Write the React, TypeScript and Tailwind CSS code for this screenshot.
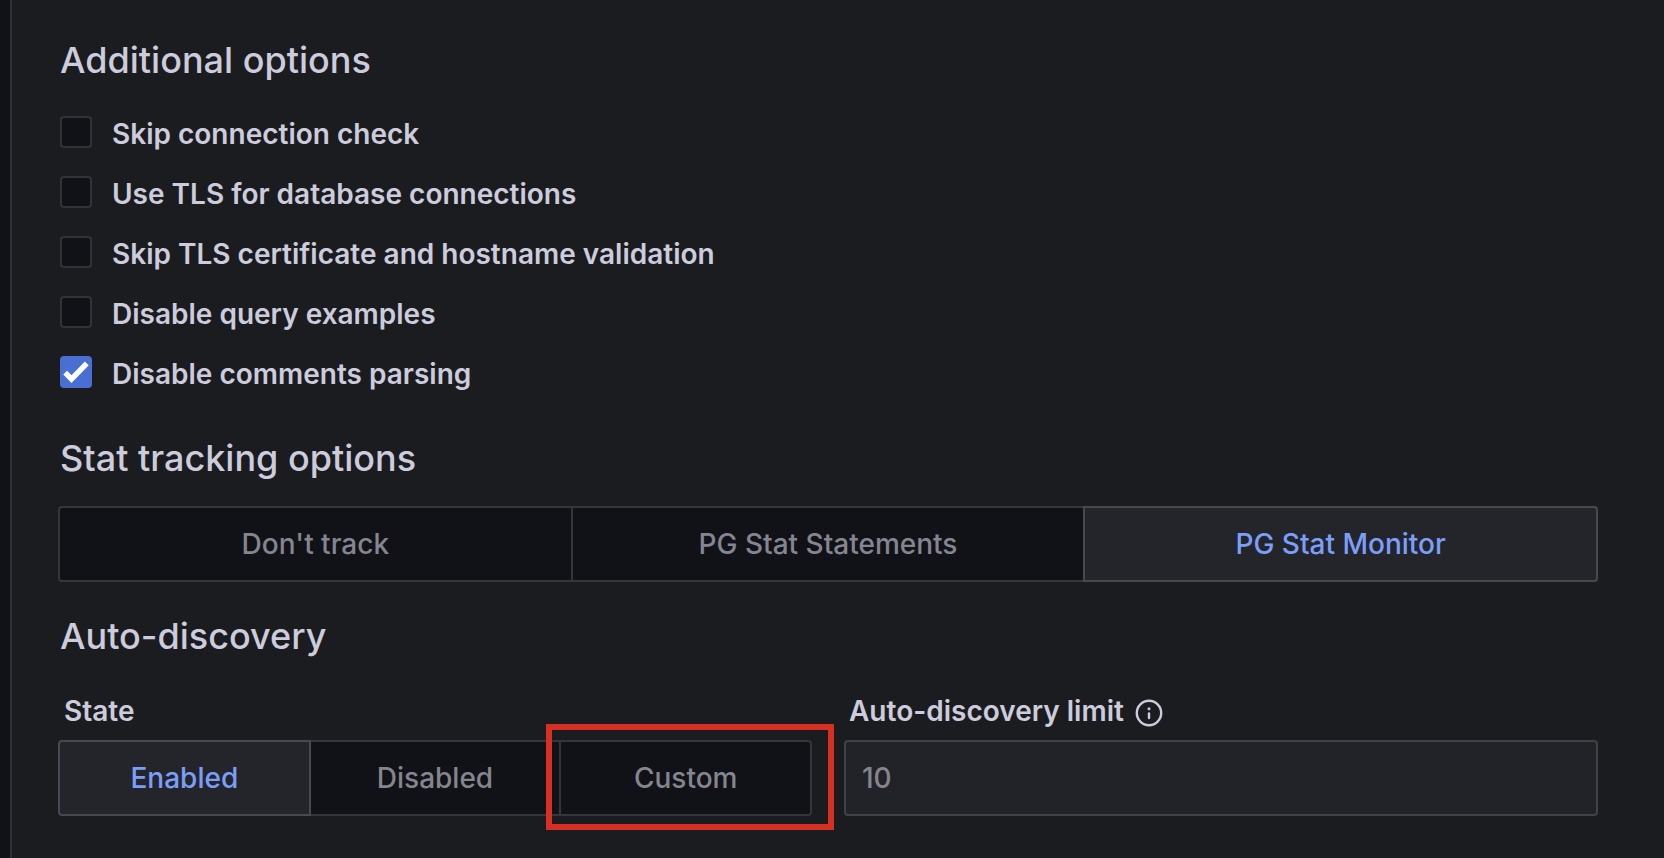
import { useState } from 'react';

type Option = { value: string; label: string; highlighted?: boolean };

const CHECKS = [
  { id: 'skip-connection', label: 'Skip connection check', checked: false },
  { id: 'use-tls', label: 'Use TLS for database connections', checked: false },
  { id: 'skip-tls', label: 'Skip TLS certificate and hostname validation', checked: false },
  { id: 'disable-examples', label: 'Disable query examples', checked: false },
  { id: 'disable-comments', label: 'Disable comments parsing', checked: true },
];

const TRACKING: Option[] = [
  { value: 'none', label: "Don't track" },
  { value: 'statements', label: 'PG Stat Statements' },
  { value: 'monitor', label: 'PG Stat Monitor' },
];

const DISCOVERY: Option[] = [
  { value: 'enabled', label: 'Enabled' },
  { value: 'disabled', label: 'Disabled' },
  { value: 'custom', label: 'Custom', highlighted: true },
];

function Heading({ children }: { children: string }) {
  return <h2 className="mb-[26px] text-4xl leading-[44px] font-medium">{children}</h2>;
}

function CheckRow({ id, label, checked }: { id: string; label: string; checked: boolean }) {
  const [on, setOn] = useState(checked);
  return (
    <div className="flex items-start gap-5">
      <span className="relative size-8 shrink-0">
        <input
          id={id}
          type="checkbox"
          checked={on}
          onChange={(e) => setOn(e.target.checked)}
          className="block size-8 appearance-none rounded-[4px] border-2 border-[#323337] bg-[#111217] checked:border-[#4a6fd3] checked:bg-[#4a6fd3]"
        />
        {on && (
          <svg viewBox="0 0 32 32" className="pointer-events-none absolute inset-0 size-8" aria-hidden="true">
            <path d="M5.2 16.7 L11.5 23.2 L26.8 7.4" fill="none" stroke="#fff" strokeWidth="5.4" />
          </svg>
        )}
      </span>
      <label htmlFor={id} className="text-[28px] leading-9 font-semibold">
        {label}
      </label>
    </div>
  );
}

function RadioGroup({ name, options, initial }: { name: string; options: Option[]; initial: string }) {
  const [value, setValue] = useState(initial);
  return (
    <div role="radiogroup" aria-label={name} className="flex pl-[2px]">
      {options.map((o) => (
        <div key={o.value} className="group relative -ml-[2px] min-w-0 flex-1 has-[:checked]:z-10">
          <input
            id={`${name}-${o.value}`}
            type="radio"
            name={name}
            checked={value === o.value}
            onChange={() => setValue(o.value)}
            className="peer sr-only"
          />
          <label
            htmlFor={`${name}-${o.value}`}
            className="flex h-[76px] items-center justify-center border-2 border-[#35363a] bg-[#111217] text-[28px] leading-9 font-medium text-[#85858f] group-first:rounded-l-[4px] group-last:rounded-r-[4px] peer-checked:border-[#48494f] peer-checked:bg-[#24252b] peer-checked:text-[#7b9ff8]"
          >
            {o.label}
          </label>
          {o.highlighted && (
            <span className="pointer-events-none absolute -top-4 -right-[22px] -bottom-[14px] -left-[13px] border-6 border-[#d63024]" />
          )}
        </div>
      ))}
    </div>
  );
}

export default function App() {
  return (
    <div className="min-h-screen bg-[#111217] pl-[10px] font-['Inter',sans-serif] text-[#ccccdc]">
      <main className="min-h-screen border-l-2 border-[#303135] bg-[#1b1c20] pt-[38px] pr-[66px] pb-10 pl-[46px]">
        <section className="mb-11">
          <div className="pl-[2px]">
            <Heading>Additional options</Heading>
            <div className="flex flex-col gap-6 pt-2">
              {CHECKS.map((c) => (
                <CheckRow key={c.id} {...c} />
              ))}
            </div>
          </div>
        </section>

        <section className="mb-8">
          <div className="pl-[2px]">
            <Heading>Stat tracking options</Heading>
          </div>
          <RadioGroup name="tracking" options={TRACKING} initial="monitor" />
        </section>

        <section>
          <div className="pl-[2px]">
            <Heading>Auto-discovery</Heading>
          </div>
          <div className="grid grid-cols-2 gap-8 pt-[11px]">
            <div>
              <div className="mb-[13px] pl-[6px] text-[28px] leading-8 font-semibold">State</div>
              <RadioGroup name="discovery" options={DISCOVERY} initial="enabled" />
            </div>
            <div>
              <div className="mb-[13px] flex items-center gap-[11px] pl-[5px]">
                <label htmlFor="limit" className="text-[28px] leading-8 font-semibold">
                  Auto-discovery limit
                </label>
                <svg viewBox="0 0 28 32" className="h-8 w-7 shrink-0" fill="none" aria-hidden="true">
                  <circle cx="14" cy="18" r="12.2" stroke="currentColor" strokeWidth="2.4" />
                  <path d="M14 18.4v4.6" stroke="currentColor" strokeWidth="2.4" strokeLinecap="round" />
                  <circle cx="14" cy="13.8" r="1.5" fill="currentColor" />
                </svg>
              </div>
              <input
                id="limit"
                type="text"
                placeholder="10"
                className="block h-[76px] w-full rounded-[4px] border-2 border-[#414246] bg-[#222328] px-4 text-[28px] leading-9 font-medium placeholder:text-[#85858f] placeholder:opacity-100"
              />
            </div>
          </div>
        </section>
      </main>
    </div>
  );
}
